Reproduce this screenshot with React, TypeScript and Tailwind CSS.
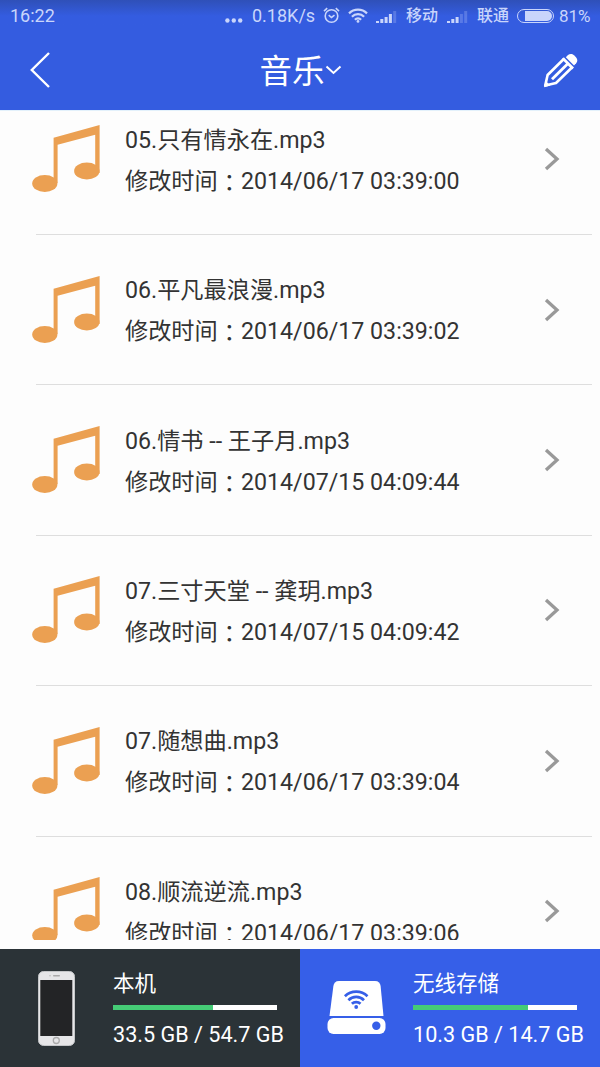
import type { ReactNode } from "react";

type Track = { name: string; modified: string };

const tracks: Track[] = [
  { name: "05.只有情永在.mp3", modified: "2014/06/17 03:39:00" },
  { name: "06.平凡最浪漫.mp3", modified: "2014/06/17 03:39:02" },
  { name: "06.情书 -- 王子月.mp3", modified: "2014/07/15 04:09:44" },
  { name: "07.三寸天堂 -- 龚玥.mp3", modified: "2014/07/15 04:09:42" },
  { name: "07.随想曲.mp3", modified: "2014/06/17 03:39:04" },
  { name: "08.顺流逆流.mp3", modified: "2014/06/17 03:39:06" },
];

function SignalIcon({ dimmed }: { dimmed: number }) {
  const heights = [2, 4, 6, 9, 12];
  return (
    <svg width="21" height="13" viewBox="0 0 21 13" fill="currentColor">
      {heights.map((h, i) => (
        <rect
          key={h}
          x={i * 4.3}
          y={13 - h}
          width="3"
          height={h}
          opacity={i >= heights.length - dimmed ? 0.25 : 1}
        />
      ))}
    </svg>
  );
}

function StatusBar() {
  return (
    <div className="flex h-8 items-center bg-linear-to-b from-[#2f50b8] to-[#345ce0] to-50% pl-[10px] text-[18px] leading-8 whitespace-nowrap text-[#c9d5fb] *:shrink-0">
      <span className="w-[45px]">16:22</span>
      <svg className="mt-2 ml-[170px]" width="18" height="5" viewBox="0 0 18 5" fill="currentColor">
        <circle cx="2.4" cy="2.5" r="2.2" />
        <circle cx="8.8" cy="2.5" r="2.2" />
        <circle cx="15.2" cy="2.5" r="2.2" />
      </svg>
      <span className="ml-[9px] w-[63px]">0.18K/s</span>
      <svg className="-mt-[2px] ml-[8px]" width="17" height="17" viewBox="0 0 17 17" fill="none" stroke="currentColor" strokeWidth="1.6">
        <circle cx="8.5" cy="9" r="6.3" />
        <path d="M1 4.2 4.2 1.2M16 4.2 12.8 1.2M5.7 8.2l2.8 2.3 3-2.3" />
      </svg>
      <svg className="-mt-[2px] ml-[8px]" width="20" height="15" viewBox="0 0 20 15" fill="none" stroke="currentColor" strokeWidth="2.2">
        <path d="M1 5.4a12.7 12.7 0 0 1 18 0M3.9 8.7a8.4 8.4 0 0 1 12.2 0M6.9 11.7a4.3 4.3 0 0 1 6.2 0" />
        <circle cx="10" cy="13.4" r="1.4" fill="currentColor" stroke="none" />
      </svg>
      <span className="ml-[8px]">
        <SignalIcon dimmed={1} />
      </span>
      <span className="ml-[9px] w-8 text-[16px] font-medium">移动</span>
      <span className="ml-[9px]">
        <SignalIcon dimmed={2} />
      </span>
      <span className="ml-[9px] w-8 text-[16px] font-medium">联通</span>
      <div className="ml-[8px] flex h-[14px] w-[37px] justify-end rounded-full border-[1.5px] border-current p-px">
        <div className="w-[27px] rounded-r-full bg-current" />
      </div>
      <span className="ml-[5px] text-[17px]">81%</span>
    </div>
  );
}

function PencilIcon() {
  return (
    <svg width="36" height="36" viewBox="0 0 36 36" fill="none" stroke="#fff">
      <path
        d="M20.8 6 4.6 22 2.2 32.6 13 30 29.2 14.2"
        strokeWidth="2.6"
        strokeLinejoin="round"
      />
      <path d="M1 34.2 2.6 28l4.8 4.6z" fill="#fff" stroke="none" />
      <path d="M9 26.2 25 10.4" strokeWidth="2.8" />
      <path d="M19.8 5.2 30 15.4" strokeWidth="2.8" />
      <path
        d="M22.8 4.2 25 2c1.8-1.6 4.4-1.3 6 .2l2 2c1.6 1.8 1.8 4.2.2 6L31 12.5z"
        fill="#fff"
        stroke="none"
      />
    </svg>
  );
}

function Header() {
  return (
    <header className="flex h-[78px] shrink-0 items-center bg-[#345ce0] pr-[21px] pl-[30px] text-white">
      <svg className="-mt-[2px]" width="36" height="36" viewBox="0 0 36 36" fill="none" stroke="currentColor" strokeWidth="2.4">
        <path d="M19 1 1.8 18 19 35" />
      </svg>
      <h1 className="mx-auto flex items-center pt-[2px] pr-[8px] text-[32.5px] leading-none">
        音乐
        <svg className="-mt-[4px]" width="17" height="10" viewBox="0 0 17 10" fill="none" stroke="currentColor" strokeWidth="2">
          <path d="M1.5 1.5 8.5 8l7-6.5" />
        </svg>
      </h1>
      <PencilIcon />
    </header>
  );
}

function NoteIcon() {
  return (
    <svg className="-mt-px shrink-0" width="68" height="68" viewBox="0 0 68 68" fill="#eba052">
      <path d="M21.6 12.7 67.6 0v48h-4.4V9.8L25.6 19.7V58h-4z" />
      <ellipse cx="12.8" cy="58.4" rx="12.6" ry="8.5" />
      <ellipse cx="54.8" cy="46" rx="12.7" ry="8.5" />
    </svg>
  );
}

function TrackRow({ track }: { track: Track }) {
  return (
    <div className="flex h-[150.4px] items-center pr-[40px] pl-8">
      <NoteIcon />
      <div className="ml-[25px] flex-1 pt-[2px] text-[23.2px] leading-[41px] whitespace-nowrap text-[#333]">
        <p className="h-[41px]">{track.name}</p>
        <p className="h-[41px]">
          修改时间
          <span className="align-[-2px] font-['Noto_Sans_CJK_TC',sans-serif] leading-none" lang="zh-TW">：</span>
          {track.modified}
        </p>
      </div>
      <svg className="-mt-px" width="16" height="24" viewBox="0 0 16 24" fill="none" stroke="#999" strokeWidth="3.3">
        <path d="M2 2 13 12 2 22" />
      </svg>
    </div>
  );
}

function PhoneIcon() {
  return (
    <svg width="37" height="75" viewBox="0 0 37 75">
      <rect x=".5" y=".5" width="36" height="74" rx="5" fill="#e6e6e8" stroke="#c4c6c8" />
      <rect x="2.3" y="9" width="32" height="56" fill="#232426" />
      <rect x="15" y="4" width="7" height="1.5" rx=".7" fill="#aaa" />
      <circle cx="12" cy="4.8" r=".8" fill="#bbb" />
      <circle cx="18.3" cy="69.5" r="3" fill="#e6e6e8" stroke="#aaa" strokeWidth="1.3" />
    </svg>
  );
}

function DiskIcon() {
  return (
    <svg width="59" height="54" viewBox="0 0 59 54">
      <path d="M12 0h36c3.5 0 5.2 2 5.6 5L56.5 35H2.5L6.4 5C6.8 2 8.5 0 12 0z" fill="#fff" />
      <rect x=".5" y="37" width="58" height="16" rx="6" fill="#fff" />
      <circle cx="49.3" cy="44.7" r="4.2" fill="#365fe8" />
      <g fill="none" stroke="#365fe8" strokeWidth="2.7">
        <path d="M17.9 15.3a16.2 16.2 0 0 1 22.6 0M21.4 19.2a11 11 0 0 1 15.6 0M24.9 22.8a6.1 6.1 0 0 1 8.6 0" />
      </g>
      <circle cx="29.2" cy="26" r="1.9" fill="#365fe8" />
    </svg>
  );
}

type StorageProps = {
  icon: ReactNode;
  label: string;
  usage: string;
  percent: number;
  className: string;
};

function Storage({ icon, label, usage, percent, className }: StorageProps) {
  return (
    <div className={`flex h-full flex-1 items-center text-white ${className}`}>
      <div className="flex w-[113px] shrink-0 justify-center">{icon}</div>
      <div className="pt-[4px] whitespace-nowrap">
        <p className="text-[21.5px] leading-[43px]">{label}</p>
        <div className="h-[5px] w-[164px] bg-white">
          <div className="h-full bg-[#45cc76]" style={{ width: `${percent}%` }} />
        </div>
        <p className="text-[21.6px] leading-[49px]">{usage}</p>
      </div>
    </div>
  );
}

export default function App() {
  return (
    <main className="flex h-[1067px] w-[600px] flex-col overflow-hidden bg-[#fdfdfd] font-[Roboto,'Noto_Sans_CJK_SC',sans-serif]">
      <StatusBar />
      <Header />
      <div className="h-[830px] shrink-0 overflow-hidden border-t border-[#e3f1fb]">
        <ul className="-mt-[26.4px]">
          {tracks.map((track) => (
            <li key={track.modified}>
              <TrackRow track={track} />
              <div className="-mt-px mr-2 ml-9 h-px bg-[#dedede]" />
            </li>
          ))}
        </ul>
      </div>
      <footer className="mt-auto flex h-[118px] shrink-0">
        <Storage
          icon={<PhoneIcon />}
          label="本机"
          usage="33.5 GB / 54.7 GB"
          percent={61}
          className="bg-[#2b3337]"
        />
        <Storage
          icon={<DiskIcon />}
          label="无线存储"
          usage="10.3 GB / 14.7 GB"
          percent={70}
          className="bg-[#365fe8]"
        />
      </footer>
    </main>
  );
}
